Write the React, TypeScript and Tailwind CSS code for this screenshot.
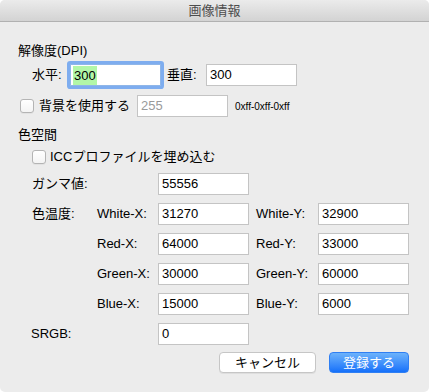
import React from 'react';

const font = { fontFamily: '"Liberation Sans", "Noto Sans CJK JP", sans-serif' };

const Field: React.FC<{ value: string; muted?: boolean; className?: string }> = ({ value, muted, className }) => (
  <div
    className={
      'flex h-[22px] w-[91px] items-center border border-[#c4c4c4] bg-white px-[3px] text-[13px] ' +
      (muted ? 'text-[#9a9a9a] ' : 'text-black ') +
      (className ?? '')
    }
  >
    {value}
  </div>
);

const Check: React.FC = () => (
  <div className="h-[14px] w-[14px] rounded-[3px] border border-[#b4b4b4] bg-gradient-to-b from-white to-[#f4f4f4] shadow-[0_1px_0_rgba(0,0,0,0.04)]" />
);

const rows = [
  ['White-X:', '31270', 'White-Y:', '32900'],
  ['Red-X:', '64000', 'Red-Y:', '33000'],
  ['Green-X:', '30000', 'Green-Y:', '60000'],
  ['Blue-X:', '15000', 'Blue-Y:', '6000'],
];

const App: React.FC = () => {
  return (
    <div className="h-[392px] w-[429px] bg-white" style={font}>
      <div className="flex h-full flex-col overflow-hidden rounded-[5px] bg-[#ececec] text-[13px] text-black">
        {/* title bar */}
        <div className="flex h-[22px] shrink-0 items-center justify-center border-b border-[#b1b1b1] bg-gradient-to-b from-[#ebebeb] to-[#d3d3d3] text-[13px] text-[#4d4d4d]">
          画像情報
        </div>

        <div className="flex flex-col pl-[18px]">
          <div className="mt-[21px] h-[16px] leading-[16px]">解像度(DPI)</div>

          {/* DPI row */}
          <div className="mt-[5px] flex h-[22px] items-center pl-[14px]">
            <span className="w-[38px]">水平:</span>
            <div className="flex h-[22px] w-[91px] items-center border border-[#8fb6e8] bg-white px-[2px] shadow-[0_0_0_3px_#7eadef] rounded-[1px]">
              <span className="bg-[#b2f7a8] px-[1px] leading-[19px]">300</span>
            </div>
            <span className="ml-[6px] w-[39px]">垂直:</span>
            <Field value="300" />
          </div>

          {/* background row */}
          <div className="mt-[9px] flex h-[22px] items-center pl-[2px]">
            <Check />
            <span className="ml-[5px] w-[98px]">背景を使用する</span>
            <Field value="255" muted />
            <span className="ml-[7px] text-[10px]">0xff-0xff-0xff</span>
          </div>

          <div className="mt-[10px] h-[16px] leading-[16px]">色空間</div>

          <div className="mt-[6px] flex h-[16px] items-center pl-[14px]">
            <Check />
            <span className="ml-[4px]">ICCプロファイルを埋め込む</span>
          </div>

          {/* gamma */}
          <div className="mt-[8px] flex h-[22px] items-center pl-[14px]">
            <span className="w-[126px]">ガンマ値:</span>
            <Field value="55556" />
          </div>

          {/* colour temperature */}
          {rows.map((r, i) => (
            <div key={r[0]} className="mt-[8px] flex h-[22px] items-center pl-[14px]">
              <span className="w-[65px]">{i === 0 ? '色温度:' : ''}</span>
              <span className="w-[61px]">{r[0]}</span>
              <Field value={r[1]} />
              <span className="ml-[7px] w-[62px]">{r[2]}</span>
              <Field value={r[3]} />
            </div>
          ))}

          <div className="mt-[8px] flex h-[22px] items-center pl-[13px]">
            <span className="w-[127px]">SRGB:</span>
            <Field value="0" />
          </div>

          {/* buttons */}
          <div className="mt-[7px] flex h-[21px] items-center pl-[201px]">
            <button className="h-[21px] w-[97px] rounded-[4px] border border-[#c6c6c6] bg-white text-[13px] text-black shadow-[0_1px_0_rgba(0,0,0,0.06)]">
              キャンセル
            </button>
            <button className="ml-[13px] h-[21px] w-[80px] rounded-[4px] border border-[#2f7ff3] bg-gradient-to-b from-[#6cb2fb] to-[#1470fa] text-[13px] text-white">
              登録する
            </button>
          </div>
        </div>
      </div>
    </div>
  );
};

export default App;
